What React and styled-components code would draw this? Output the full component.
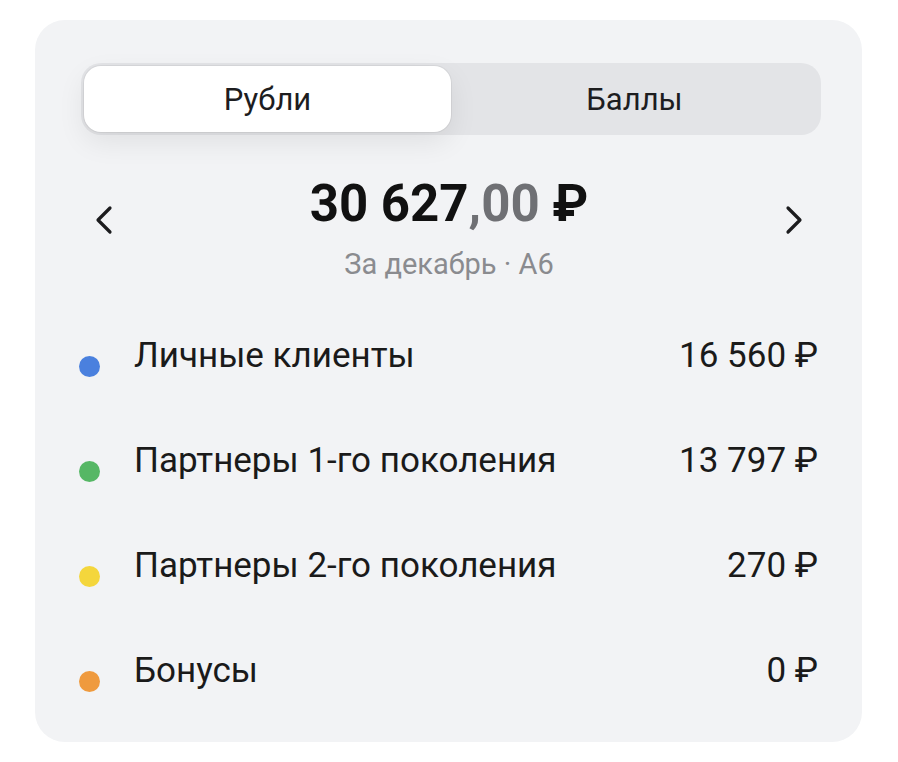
import React from "react";
import styled, { createGlobalStyle } from "styled-components";

const Global = createGlobalStyle`
  html, body { margin: 0; padding: 0; background: #ffffff; }
  body { font-family: Roboto, "Noto Sans", "Liberation Sans", sans-serif; color: #1c1c1e; }
`;

const Page = styled.div`
  padding: 20px 36px 20px 35px;
`;

const Card = styled.div`
  width: 827px;
  height: 722px;
  box-sizing: border-box;
  background: #f2f3f5;
  border-radius: 30px;
  padding: 43px 41px 0 46px;
  display: flex;
  flex-direction: column;
`;

const Tabs = styled.div`
  display: flex;
  height: 72px;
  box-sizing: border-box;
  padding: 3px;
  background: #e3e4e7;
  border-radius: 20px;
`;

const Tab = styled.div`
  flex: 1;
  display: flex;
  align-items: center;
  justify-content: center;
  font-size: 31px;
  font-weight: 400;
  color: #1d1d1f;
  border-radius: 17px;
  background: ${(p) => (p.$active ? "#ffffff" : "transparent")};
  box-shadow: ${(p) =>
    p.$active ? "0 0 0 1px rgba(0,0,0,0.05), 0 10px 28px rgba(0,0,0,0.08)" : "none"};
`;

const Summary = styled.div`
  display: flex;
  align-items: flex-start;
  justify-content: space-between;
  padding: 0 18px 0 14px;
  margin-top: 39px;
`;

const Arrow = styled.div`
  width: 18px;
  height: 30px;
  margin-top: 31px;
  display: flex;
  align-items: center;
  justify-content: center;
`;

const Center = styled.div`
  display: flex;
  flex-direction: column;
  align-items: center;
`;

const Amount = styled.div`
  font-size: 51px;
  font-weight: 700;
  line-height: 60px;
  color: #111111;
`;

const Decimals = styled.span`
  color: #6f7074;
`;

const Subtitle = styled.div`
  margin-top: 13px;
  font-size: 29px;
  line-height: 34px;
  color: #8a8b8f;
`;

const List = styled.div`
  display: flex;
  flex-direction: column;
  margin-top: 22px;
`;

const Row = styled.div`
  display: flex;
  align-items: center;
  height: 105px;
  padding-right: 3px;
`;

const Dot = styled.span`
  width: 21px;
  height: 21px;
  border-radius: 50%;
  background: ${(p) => p.$color};
  margin-left: -2px;
  margin-right: 34px;
  margin-top: 22px;
  flex-shrink: 0;
`;

const Label = styled.div`
  flex: 1;
  font-size: 35px;
  line-height: 40px;
  color: #1a1a1a;
`;

const Value = styled.div`
  font-size: 35px;
  line-height: 40px;
  color: #1a1a1a;
`;

const Chevron = ({ dir }) => (
  <svg width="18" height="30" viewBox="0 0 18 30" fill="none">
    <path
      d={dir === "left" ? "M15 3 L3 15 L15 27" : "M3 3 L15 15 L3 27"}
      stroke="#1c1c1e"
      strokeWidth="3.2"
      strokeLinecap="round"
      strokeLinejoin="round"
    />
  </svg>
);

const rows = [
  { color: "#4a80de", label: "Личные клиенты", value: "16 560 ₽" },
  { color: "#56b765", label: "Партнеры 1-го поколения", value: "13 797 ₽" },
  { color: "#f4d63c", label: "Партнеры 2-го поколения", value: "270 ₽" },
  { color: "#ef9a3e", label: "Бонусы", value: "0 ₽" },
];

export default function App() {
  return (
    <Page>
      <Global />
      <Card>
        <Tabs>
          <Tab $active>Рубли</Tab>
          <Tab>Баллы</Tab>
        </Tabs>
        <Summary>
          <Arrow>
            <Chevron dir="left" />
          </Arrow>
          <Center>
            <Amount>
              30 627<Decimals>,00</Decimals> ₽
            </Amount>
            <Subtitle>За декабрь · А6</Subtitle>
          </Center>
          <Arrow>
            <Chevron dir="right" />
          </Arrow>
        </Summary>
        <List>
          {rows.map((r) => (
            <Row key={r.label}>
              <Dot $color={r.color} />
              <Label>{r.label}</Label>
              <Value>{r.value}</Value>
            </Row>
          ))}
        </List>
      </Card>
    </Page>
  );
}
